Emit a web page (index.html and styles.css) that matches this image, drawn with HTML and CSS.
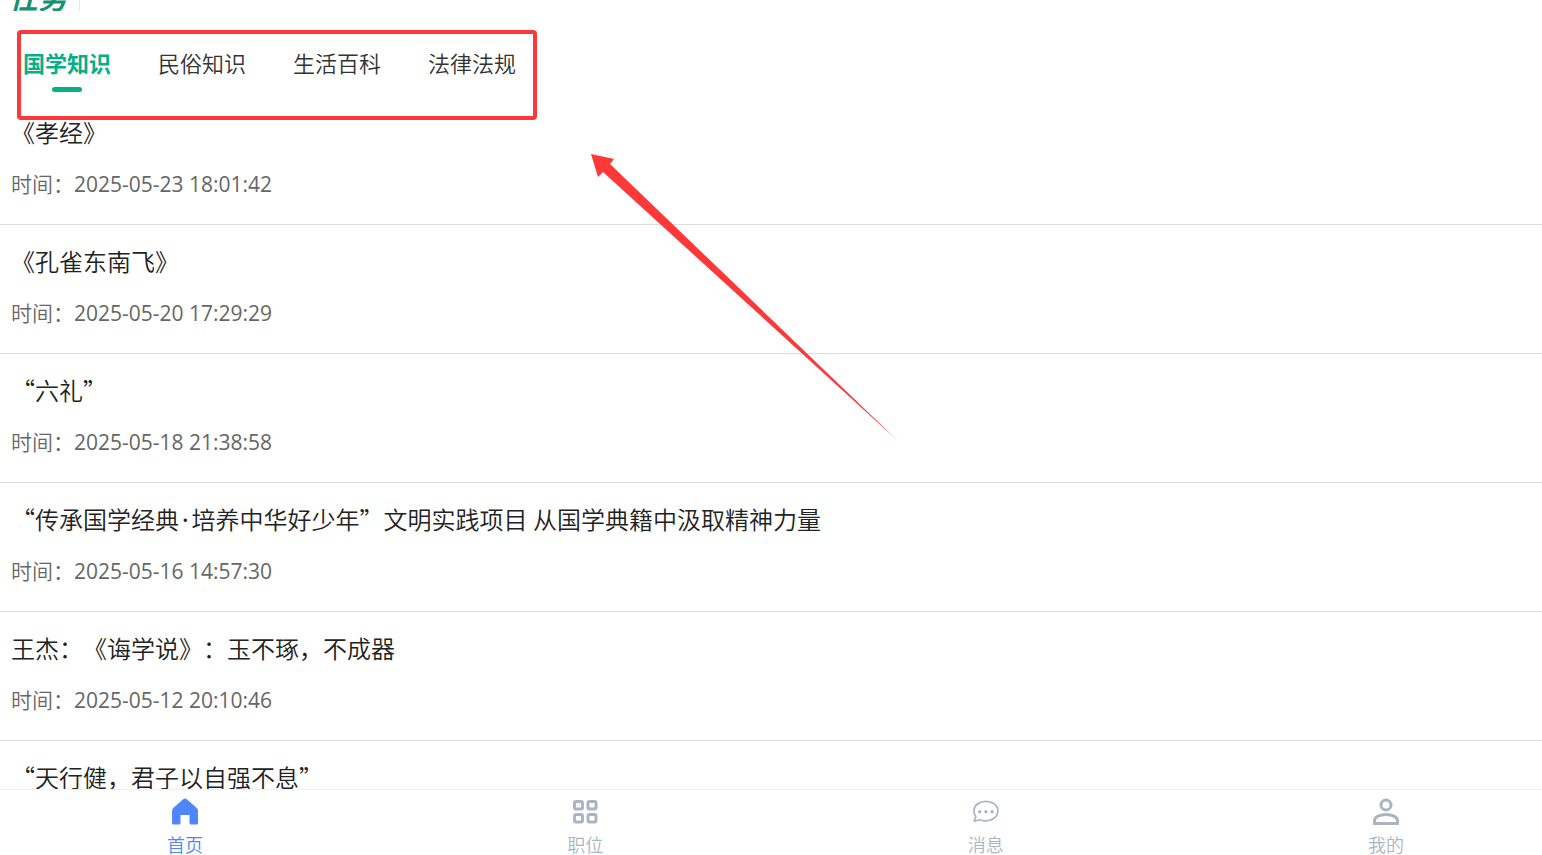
FILE: index.html
```
<!DOCTYPE html>
<html lang="zh-CN">
<head>
    <meta charset="UTF-8">
    <meta name="viewport" content="width=device-width, initial-scale=1.0">
    <title>国学知识</title>
    <link rel="stylesheet" href="styles.css">
</head>
<body>
    <header class="banner">
        <h1 class="banner-title">任务</h1>
    </header>

    <nav class="tabs">
        <button type="button" class="tab active">国学知识</button>
        <button type="button" class="tab">民俗知识</button>
        <button type="button" class="tab">生活百科</button>
        <button type="button" class="tab">法律法规</button>
    </nav>

    <main class="list">
        <article class="item">
            <h2 class="item-title">《孝经》</h2>
            <p class="item-time">时间：<time>2025-05-23 18:01:42</time></p>
        </article>
        <article class="item">
            <h2 class="item-title">《孔雀东南飞》</h2>
            <p class="item-time">时间：<time>2025-05-20 17:29:29</time></p>
        </article>
        <article class="item">
            <h2 class="item-title">“六礼”</h2>
            <p class="item-time">时间：<time>2025-05-18 21:38:58</time></p>
        </article>
        <article class="item">
            <h2 class="item-title">“传承国学经典<span class="dot">·</span>培养中华好少年”文明实践项目 从国学典籍中汲取精神力量</h2>
            <p class="item-time">时间：<time>2025-05-16 14:57:30</time></p>
        </article>
        <article class="item">
            <h2 class="item-title">王杰：《诲学说》：玉不琢，不成器</h2>
            <p class="item-time">时间：<time>2025-05-12 20:10:46</time></p>
        </article>
        <article class="item">
            <h2 class="item-title">“天行健，君子以自强不息”</h2>
        </article>
    </main>

    <nav class="tabbar">
        <a href="#" class="tabbar-item active">
            <svg width="28" height="28" viewBox="0 0 28 28">
                <path fill="currentColor" d="M12.200 1.300Q14 -.2 15.800 1.300L25.500 9.800Q27 11.100 27 13V25Q27 26.500 25.500 26.500H20Q18.500 26.500 18.500 25V17H9.500V25Q9.500 26.500 8 26.500H2.500Q1 26.500 1 25V13Q1 11.100 2.500 9.800Z"/>
            </svg>
            <span>首页</span>
        </a>
        <a href="#" class="tabbar-item">
            <svg width="28" height="28" viewBox="0 0 28 28" fill="none" stroke="currentColor" stroke-width="3">
                <rect x="3.500" y="3.500" width="8" height="7.500" rx="1.500"/>
                <rect x="17" y="3.500" width="8" height="7.500" rx="1.500"/>
                <rect x="3.500" y="16.500" width="8" height="7.500" rx="1.500"/>
                <rect x="17" y="16.500" width="8" height="7.500" rx="1.500"/>
            </svg>
            <span>职位</span>
        </a>
        <a href="#" class="tabbar-item">
            <svg width="28" height="28" viewBox="0 0 28 28">
                <path fill="none" stroke="currentColor" stroke-width="1.700" stroke-linejoin="round" d="M3.800 18.500C.8 14.500 1.200 9 5.800 5.800C10.500 2.500 17.500 2.500 22 5.800C27.200 9.500 27.200 16.500 22 20.200C17.800 23.200 11.800 23.400 7.500 21.700L2.300 23.300Z"/>
                <g fill="currentColor">
                    <circle cx="7.700" cy="13.800" r="1.700"/>
                    <circle cx="13.900" cy="13.800" r="1.700"/>
                    <circle cx="20.100" cy="13.800" r="1.700"/>
                </g>
            </svg>
            <span>消息</span>
        </a>
        <a href="#" class="tabbar-item">
            <svg width="28" height="28" viewBox="0 0 28 28" fill="none" stroke="currentColor" stroke-width="3">
                <circle cx="14" cy="7" r="5"/>
                <path d="M2.500 25.500V22.500C2.500 19 8 16.500 14 16.500S25.500 19 25.500 22.500V25.500Z"/>
            </svg>
            <span>我的</span>
        </a>
    </nav>

    <!-- marks the category tabs -->
    <div class="mark-box"></div>
    <svg class="mark-arrow" width="310" height="290" viewBox="0 0 310 290">
        <path fill="#fc3838" d="M1 0L24 5L20 10L308 287L13 18L8 23Z"/>
    </svg>
</body>
</html>
```

FILE: styles.css
```
* {
    margin: 0;
    padding: 0;
    box-sizing: border-box;
}

body {
    display: flex;
    flex-direction: column;
    height: 100vh;
    overflow: hidden;
    position: relative;
    background: #fff;
    color: #222;
    font-family: "Noto Sans CJK SC", sans-serif;
    font-weight: 350;
    text-spacing-trim: space-all;
}

.banner {
    display: flex;
    align-items: flex-end;
    flex: none;
    height: 11px;
    padding-left: 9px;
    overflow: hidden;
}

.banner-title {
    width: 71px;
    border-right: 1px solid #e8e8e8;
    color: #16906f;
    font-size: 29px;
    font-style: italic;
    font-weight: bold;
    line-height: 30px;
}

.tabs {
    display: flex;
    flex: none;
    gap: 47px;
    height: 85px;
    padding: 36px 23px 0;
}

.tab {
    display: flex;
    flex-direction: column;
    justify-content: flex-start;
    align-items: center;
    gap: 10px;
    height: 46px;
    border: none;
    background: none;
    color: #333;
    font-family: inherit;
    font-size: 22px;
    font-weight: inherit;
    line-height: 30px;
    cursor: pointer;
}

.tab.active {
    color: #05b087;
    font-weight: bold;
}

.tab.active::after {
    content: "";
    width: 30px;
    height: 5px;
    border-radius: 3px;
    background: #05b087;
}

.list {
    flex: 1;
    min-height: 0;
    overflow: hidden;
}

.item {
    height: 129px;
    padding: 18px 11px 0;
    border-bottom: 1px solid #dcdcdc;
}

.item-title {
    font-size: 24px;
    font-weight: inherit;
    line-height: 36px;
}

.item-title .dot {
    padding: 0 3px;
    font-family: "Noto Sans", sans-serif;
    font-weight: 500;
    line-height: 24px;
}

.item-time {
    margin-top: 17px;
    color: #666;
    font-size: 21px;
    line-height: 32px;
}

.item-time time {
    font-family: "Open Sans", "Noto Sans", sans-serif;
    font-weight: 400;
}

.tabbar {
    display: flex;
    justify-content: space-between;
    flex: none;
    height: 66px;
    padding: 8px 138px 0 167px;
    border-top: 1px solid #f2f2f2;
    background: #fff;
}

.tabbar-item {
    display: flex;
    flex-direction: column;
    align-items: center;
    gap: 5px;
    width: 36px;
    color: #aab5c4;
    font-size: 18px;
    line-height: 26px;
    text-decoration: none;
}

.tabbar-item svg {
    flex: none;
}

.tabbar-item.active {
    color: #4f86fb;
}

.mark-box {
    position: absolute;
    top: 30px;
    left: 17px;
    width: 520px;
    height: 90px;
    border: 4px solid #fc3838;
    border-radius: 4px;
    pointer-events: none;
}

.mark-arrow {
    position: absolute;
    top: 154px;
    left: 590px;
    pointer-events: none;
}
```
